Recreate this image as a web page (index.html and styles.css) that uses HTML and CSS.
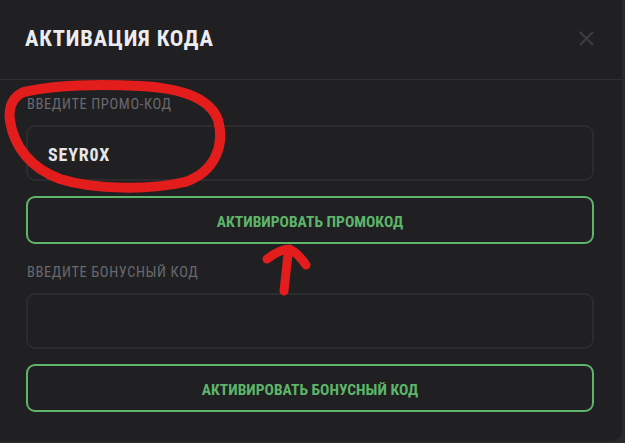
FILE: index.html
```html
<!DOCTYPE html>
<html lang="ru">
<head>
<meta charset="utf-8">
<link rel="stylesheet" href="styles.css">
</head>
<body>
<div class="modal">
  <div class="header">
    <h1 class="title">АКТИВАЦИЯ КОДА</h1>
    <svg class="close" width="15" height="15" viewBox="0 0 15 15"><path d="M1.5 1.5 L13.5 13.5 M13.5 1.5 L1.5 13.5" stroke="#3c3c42" stroke-width="2.2" stroke-linecap="round"/></svg>
  </div>
  <div class="body">
    <div class="field">
      <div class="label">ВВЕДИТЕ ПРОМО-КОД</div>
      <div class="input"><span class="value">SEYR0X</span></div>
    </div>
    <button class="btn">АКТИВИРОВАТЬ ПРОМОКОД</button>
    <div class="field second">
      <div class="label">ВВЕДИТЕ БОНУСНЫЙ КОД</div>
      <div class="input"></div>
    </div>
    <button class="btn">АКТИВИРОВАТЬ БОНУСНЫЙ КОД</button>
  </div>
  <svg class="marks" width="625" height="443" viewBox="0 0 625 443">
    <path d="M24 92 C 13 96, 8 107, 10 121 C 14 146, 30 168, 60 179 C 95 190, 150 190, 185 182 C 215 172, 225 145, 218 120 C 210 98, 180 88, 140 86 C 100 84, 55 85, 24 92" fill="none" stroke="#e31c1c" stroke-width="10" stroke-linecap="round"/>
    <path d="M284 291 L 288 254 M267 259 C 275 253, 283 249, 289 249 C 296 252, 302 259, 306 265" fill="none" stroke="#e31c1c" stroke-width="9" stroke-linecap="round" stroke-linejoin="round"/>
  </svg>
</div>
</body>
</html>
```
FILE: styles.css
```css
html, body {
  margin: 0;
  padding: 0;
  background: #2a2a2d;
  width: 625px;
  height: 443px;
  overflow: hidden;
}
body {
  font-family: "Roboto Condensed", "DejaVu Sans", sans-serif;
}
.modal {
  position: relative;
  width: 622px;
  height: 441px;
  background: #202022;
  border-radius: 0 0 10px 0;
}
.header {
  height: 80px;
  border-bottom: 1px solid #313134;
  display: flex;
  align-items: center;
  justify-content: space-between;
  padding: 0 28px 0 25px;
  box-sizing: border-box;
}
.title {
  margin: 0 0 3px 0;
  font-size: 22.5px;
  font-weight: bold;
  letter-spacing: 0.8px;
  color: #ececee;
}
.close {
  margin-bottom: 3px;
}
.body {
  padding: 16px 28px 0 26px;
  display: flex;
  flex-direction: column;
}
.field {
  display: flex;
  flex-direction: column;
}
.label {
  font-size: 14.5px;
  letter-spacing: 0.6px;
  color: #68686d;
  padding-left: 1px;
  height: 18px;
  line-height: 18px;
}
.input {
  margin-top: 11px;
  height: 56px;
  border: 2px solid #2c2c2f;
  border-radius: 9px;
  box-sizing: border-box;
  display: flex;
  align-items: center;
  padding: 2px 0 0 20px;
}
.value {
  font-size: 18px;
  font-weight: bold;
  letter-spacing: 0.8px;
  color: #e6e6e8;
}
.btn {
  margin-top: 15px;
  height: 48px;
  padding: 3px 0 0 0;
  border: 2px solid #5db56a;
  border-radius: 9px;
  background: transparent;
  color: #5db56a;
  font-family: inherit;
  font-size: 15.5px;
  font-weight: bold;
}
.field.second {
  margin-top: 20px;
}
.marks {
  position: absolute;
  left: 0;
  top: 0;
  pointer-events: none;
}
```
